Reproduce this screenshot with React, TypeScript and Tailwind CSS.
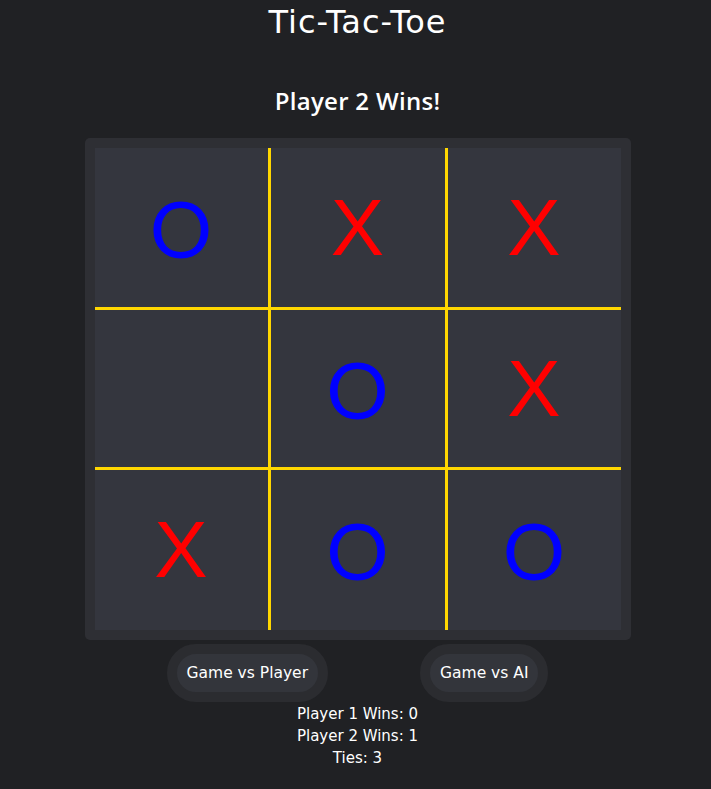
import React from 'react';

type Mark = 'X' | 'O' | '';

const board: Mark[] = ['O', 'X', 'X', '', 'O', 'X', 'X', 'O', 'O'];

const cellBorder = (i: number) => {
  const col = i % 3;
  const row = Math.floor(i / 3);
  const classes: string[] = [];
  if (col < 2) classes.push('border-r-[3px]');
  if (row < 2) classes.push('border-b-[3px]');
  return classes.join(' ');
};

const Cell: React.FC<{ mark: Mark; index: number }> = ({ mark, index }) => (
  <div
    className={`flex items-center justify-center border-[#ffd700] bg-[#34363e] ${cellBorder(index)}`}
  >
    <span
      className={`leading-none ${
        mark === 'X'
          ? "text-[80px] text-[#ff0000] font-['Liberation_Sans',sans-serif]"
          : "text-[78px] font-normal text-[#0000ff] font-['Lato',sans-serif]"
      }`}
    >
      {mark}
    </span>
  </div>
);

const ModeButton: React.FC<{ label: string }> = ({ label }) => (
  <button className="rounded-full border-[10px] border-[#2b2c30] bg-[#33353b] px-[10px] py-[9px] text-[15.5px] leading-5 text-white">
    {label}
  </button>
);

export default function App() {
  return (
    <div className="min-h-[789px] bg-[#202124] pl-[4px] text-white font-['DejaVu_Sans',sans-serif] flex flex-col items-center">
      <h1 className="text-[32px] leading-[44px] font-normal tracking-[1px]">Tic-Tac-Toe</h1>
      <h2 className="mt-[41px] text-[24px] leading-8 font-semibold tracking-[0.3px] font-['Open_Sans',sans-serif]">
        Player 2 Wins!
      </h2>

      <div className="mt-[21px] rounded-[5px] bg-[#2e2f34] p-[10px]">
        <div className="grid h-[482px] w-[526px] grid-cols-[176px_177px_173px] grid-rows-[162px_160px_160px]">
          {board.map((mark, i) => (
            <Cell key={i} mark={mark} index={i} />
          ))}
        </div>
      </div>

      <div className="mt-[4px] flex gap-[92px]">
        <ModeButton label="Game vs Player" />
        <ModeButton label="Game vs AI" />
      </div>

      <div className="mt-[1px] text-center text-[15px] leading-[22px]">
        <p>Player 1 Wins: 0</p>
        <p>Player 2 Wins: 1</p>
        <p>Ties: 3</p>
      </div>
    </div>
  );
}
